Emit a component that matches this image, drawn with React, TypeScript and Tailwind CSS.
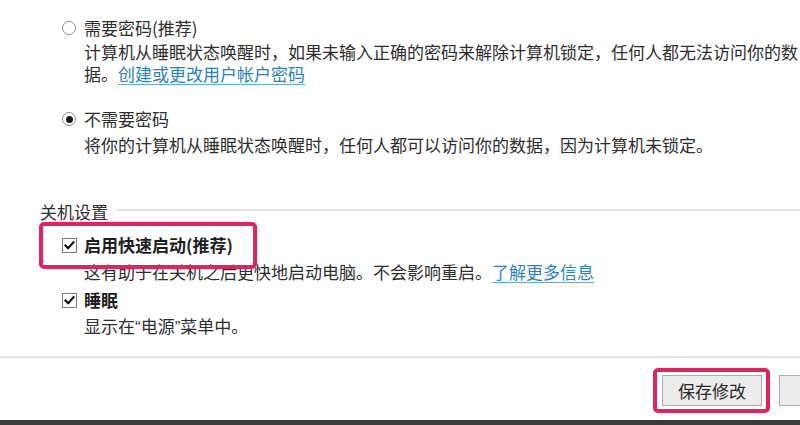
const FONT = { fontFamily: '"Noto Sans CJK SC", "Noto Sans", sans-serif' }
const LATIN = { fontFamily: '"Liberation Sans", sans-serif' }

function Radio({ checked }: { checked?: boolean }) {
  return (
    <span className="flex h-[14px] w-[14px] shrink-0 items-center justify-center rounded-full border border-[#8c8c8c] bg-white">
      {checked && <span className="h-[7px] w-[7px] rounded-full bg-[#1a1a1a]" />}
    </span>
  )
}

function Check() {
  return (
    <span className="flex h-[15px] w-[15px] shrink-0 items-center justify-center border border-[#7a7a7a] bg-white">
      <svg width="13" height="13" viewBox="0 0 13 13">
        <path d="M2.5 6.5 L5.2 9.2 L10.5 3.2" fill="none" stroke="#111" strokeWidth="2.2" strokeLinecap="square" />
      </svg>
    </span>
  )
}

function Highlight({ className }: { className: string }) {
  return <span className={`pointer-events-none absolute z-10 rounded-[5px] border-4 border-[#e8205f] ${className}`} />
}

function Link({ children }: { children: string }) {
  return <a className="text-[#2c7fc2] underline decoration-[#6aa6d6] underline-offset-[3px]">{children}</a>
}

export default function App() {
  return (
    <div className="relative flex h-[425px] w-[800px] flex-col overflow-hidden bg-white text-[17px] text-[#2e2e2e]" style={FONT}>
      <div className="flex flex-col pl-[62px] pt-[16px]">
        <div className="flex items-center gap-[8px] leading-[24px]">
          <Radio />
          <span className="whitespace-nowrap">需要密码(推荐)</span>
        </div>
        <div className="mt-[1px] pl-[22px] leading-[22px]">
          <p className="whitespace-nowrap">计算机从睡眠状态唤醒时，如果未输入正确的密码来解除计算机锁定，任何人都无法访问你的数</p>
          <p className="whitespace-nowrap">
            据。<Link>创建或更改用户帐户密码</Link>
          </p>
        </div>

        <div className="mt-[22px] flex items-center gap-[8px] leading-[24px]">
          <Radio checked />
          <span className="whitespace-nowrap">不需要密码</span>
        </div>
        <p className="mt-[3px] whitespace-nowrap pl-[22px] leading-[22px]">
          将你的计算机从睡眠状态唤醒时，任何人都可以访问你的数据，因为计算机未锁定。
        </p>
      </div>

      <div className="mt-[45px] flex items-center gap-[9px] pl-[40px] leading-[22px]">
        <span className="whitespace-nowrap">关机设置</span>
        <span className="mt-[-4px] h-[2px] flex-1 bg-[#e2e2e2]" />
      </div>

      <div className="flex flex-col pl-[62px]">
        <div className="relative mt-[10px] flex items-center gap-[7px] leading-[24px]">
          <Highlight className="left-[-23px] top-[-11px] h-[47px] w-[218px]" />
          <Check />
          <span className="whitespace-nowrap font-bold text-[#1e1e1e]">启用快速启动(推荐)</span>
        </div>
        <p className="mt-[4px] whitespace-nowrap pl-[22px] leading-[22px]">
          这有助于在关机之后更快地启动电脑。不会影响重启。<Link>了解更多信息</Link>
        </p>

        <div className="mt-[5px] flex items-center gap-[7px] leading-[24px]">
          <Check />
          <span className="whitespace-nowrap font-bold text-[#1e1e1e]">睡眠</span>
        </div>
        <p className="mt-[3px] whitespace-nowrap pl-[22px] leading-[22px]">
          显示在<span style={LATIN}>“</span>电源<span style={LATIN}>”</span>菜单中。
        </p>
      </div>

      <div className="mt-[17px] h-[2px] bg-[#e4e4e4]" />

      <div className="flex flex-1 items-start justify-end pt-[17px] -mr-[79px]">
        <div className="relative">
          <Highlight className="left-[-9px] top-[-7px] h-[45px] w-[117px]" />
          <button className="flex h-[31px] w-[100px] items-center justify-center border border-[#acacac] bg-[#ececec] text-[17px] text-[#2a2a2a]">
            保存修改
          </button>
        </div>
        <button className="ml-[17px] h-[31px] w-[100px] border border-[#acacac] bg-[#ececec]" />
      </div>

      <div className="h-[5px] bg-[#3b3b3b]" />
    </div>
  )
}
